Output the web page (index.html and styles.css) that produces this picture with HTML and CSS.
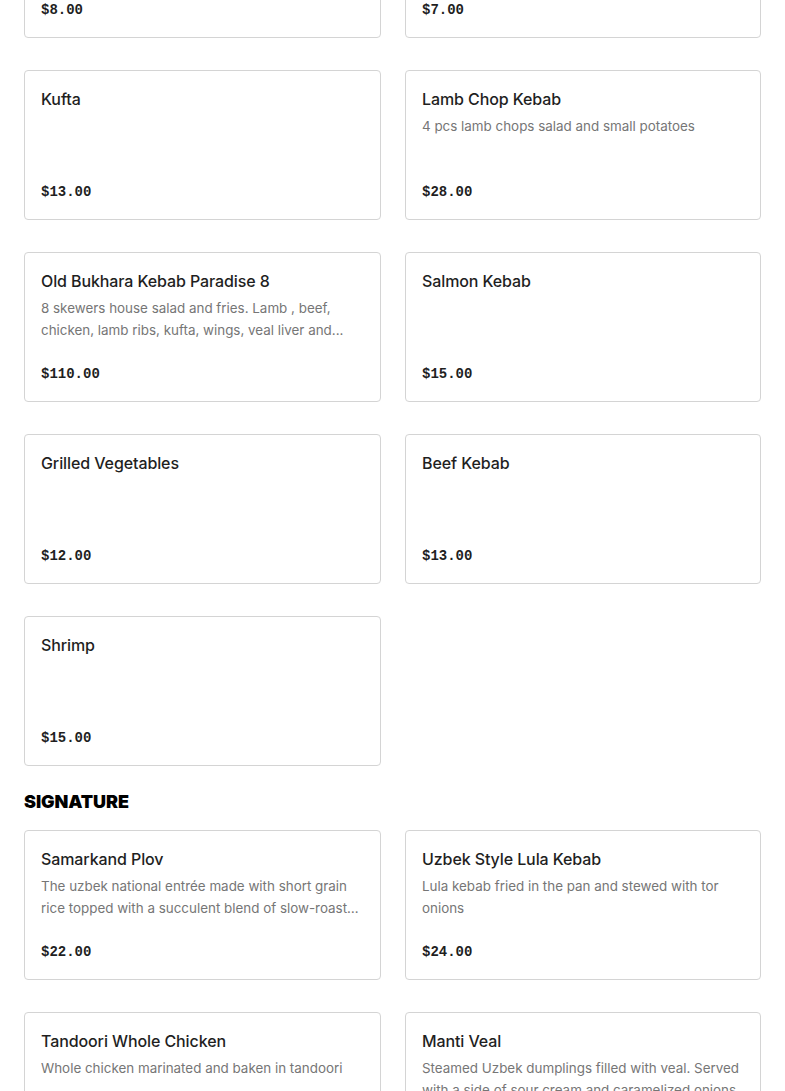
FILE: index.html
```html
<!DOCTYPE html>
<html lang="en">
<head>
<meta charset="utf-8">
<title>Menu</title>
<link rel="stylesheet" href="styles.css">
</head>
<body>
<main class="menu">
  <section class="section">
    <div class="grid">
      <div class="card"><h3 class="name">Chicken Wings</h3><p class="price">$8.00</p></div>
      <div class="card"><h3 class="name">Veal Liver</h3><p class="price">$7.00</p></div>
      <div class="card"><h3 class="name">Kufta</h3><p class="price">$13.00</p></div>
      <div class="card"><h3 class="name">Lamb Chop Kebab</h3><p class="desc">4 pcs lamb chops salad and small potatoes</p><p class="price">$28.00</p></div>
      <div class="card"><h3 class="name">Old Bukhara Kebab Paradise 8</h3><p class="desc">8 skewers house salad and fries. Lamb , beef, chicken, lamb ribs, kufta, wings, veal liver and...</p><p class="price">$110.00</p></div>
      <div class="card"><h3 class="name">Salmon Kebab</h3><p class="price">$15.00</p></div>
      <div class="card"><h3 class="name">Grilled Vegetables</h3><p class="price">$12.00</p></div>
      <div class="card"><h3 class="name">Beef Kebab</h3><p class="price">$13.00</p></div>
      <div class="card"><h3 class="name">Shrimp</h3><p class="price">$15.00</p></div>
    </div>
  </section>
  <section class="section">
    <h2 class="section-title">SIGNATURE</h2>
    <div class="grid">
      <div class="card"><h3 class="name">Samarkand Plov</h3><p class="desc">The uzbek national entrée made with short grain rice topped with a succulent blend of slow-roasted lamb, carrots and chickpeas</p><p class="price">$22.00</p></div>
      <div class="card"><h3 class="name">Uzbek Style Lula Kebab</h3><p class="desc">Lula kebab fried in the pan and stewed with tor onions</p><p class="price">$24.00</p></div>
      <div class="card"><h3 class="name">Tandoori Whole Chicken</h3><p class="desc">Whole chicken marinated and baken in tandoori</p><p class="price">$35.00</p></div>
      <div class="card"><h3 class="name">Manti Veal</h3><p class="desc">Steamed Uzbek dumplings filled with veal. Served with a side of sour cream and caramelized onions</p><p class="price">$18.00</p></div>
    </div>
  </section>
</main>
</body>
</html>
```
FILE: styles.css
```css
* { box-sizing: border-box; }
html, body { margin: 0; padding: 0; background: #fff; }
body { font-family: Inter, "Noto Sans", sans-serif; color: #1f1f1f; }
.menu { padding: 0 24px; margin-top: -112px; }
.section { display: flex; flex-direction: column; }
.grid {
  display: grid;
  grid-template-columns: 357fr 356fr;
  column-gap: 24px;
  row-gap: 32px;
}
.card {
  height: 150px;
  border: 1px solid #d4d4d4;
  border-radius: 4px;
  padding: 16px 16px 17px;
  display: flex;
  flex-direction: column;
  background: #fff;
}
.name {
  margin: 0;
  font-size: 16px;
  line-height: 24px;
  font-weight: 500;
  color: #1f1f1f;
  letter-spacing: -0.1px;
}
.desc {
  margin: 4px 0 0;
  font-size: 13.4px;
  line-height: 22px;
  color: #767676;
  display: -webkit-box;
  -webkit-line-clamp: 2;
  -webkit-box-orient: vertical;
  overflow: hidden;
}
.price {
  margin: auto 0 0;
  font-family: "Liberation Mono", "DejaVu Sans Mono", monospace;
  font-weight: 700;
  font-size: 14px;
  line-height: 20px;
  color: #1f1f1f;
}
.section-title {
  margin: 24px 0 16px;
  font-size: 18px;
  line-height: 24px;
  font-weight: 900;
  color: #000;
  letter-spacing: -0.1px;
}
```
